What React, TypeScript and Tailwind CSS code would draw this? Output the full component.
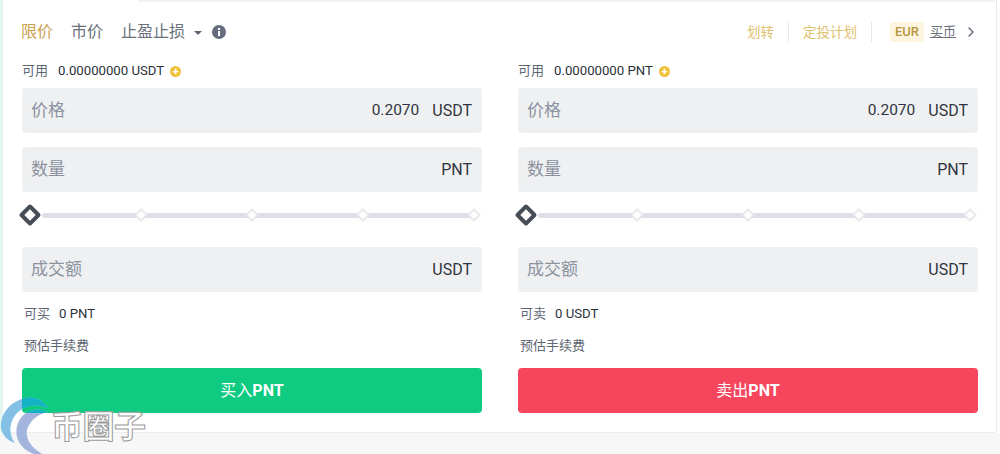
import { ChevronRight } from 'lucide-react'

function Field({ label, value, unit }: { label: string; value?: string; unit: string }) {
  return (
    <div className="flex h-[45px] items-center justify-between rounded-[3px] bg-[#eff0f2] pl-[9px] pr-[10px]">
      <span className="text-[17px] text-[#8b929e]">{label}</span>
      <div className="flex items-center gap-[13px] text-[#2f3540]">
        {value && <span className="text-[15.5px]">{value}</span>}
        <span className="text-[16px]">{unit}</span>
      </div>
    </div>
  )
}

function Slider() {
  return (
    <div className="relative mt-[12px] flex h-[22px] items-center">
      <div className="ml-[20px] mr-[6px] h-[5px] flex-1 rounded-sm bg-[#dfe0e7]" />
      <div className="absolute left-0 top-[3px] h-[16px] w-[16px] rotate-45 rounded-[2px] border-[4px] border-[#474d57] bg-white" />
      <div className="absolute left-[114px] top-[6px] h-[10px] w-[10px] rotate-45 rounded-[1px] border-2 border-[#e6e8ec] bg-white" />
      <div className="absolute left-[225px] top-[6px] h-[10px] w-[10px] rotate-45 rounded-[1px] border-2 border-[#e6e8ec] bg-white" />
      <div className="absolute left-[336px] top-[6px] h-[10px] w-[10px] rotate-45 rounded-[1px] border-2 border-[#e6e8ec] bg-white" />
      <div className="absolute left-[447px] top-[6px] h-[10px] w-[10px] rotate-45 rounded-[1px] border-2 border-[#e6e8ec] bg-white" />
    </div>
  )
}

function OrderForm(props: { balance: string; canLabel: string; canValue: string; action: string; color: string }) {
  return (
    <div className="w-[460px]">
      <div className="flex h-[18px] items-center text-[13px]">
        <span className="text-[#5e6673]">可用</span>
        <span className="ml-[10px] text-[13.2px] text-[#2b3139]">{props.balance}</span>
        <span className="ml-[6px] flex h-[11px] w-[11px] items-center justify-center rounded-full bg-[#efc23a] text-[11px] font-bold leading-none text-white">+</span>
      </div>
      <div className="mt-[8px]">
        <div className="mb-[14px]">
          <Field label="价格" value="0.2070" unit="USDT" />
        </div>
        <Field label="数量" unit="PNT" />
      </div>
      <Slider />
      <div className="mt-[21px]">
        <Field label="成交额" unit="USDT" />
      </div>
      <div className="mt-[13px] flex h-[18px] items-center pl-[2px] text-[13px]">
        <span className="text-[#5e6673]">{props.canLabel}</span>
        <span className="ml-[9px] text-[13.2px] text-[#2b3139]">{props.canValue}</span>
      </div>
      <div className="mt-[14px] flex h-[18px] items-center pl-[2px] text-[13px] text-[#5e6673]">预估手续费</div>
      <button className={`mt-[13px] flex h-[45px] w-full items-center justify-center rounded-[4px] text-[16px] text-white ${props.color}`}>
        {props.action}
        <span className="font-bold">PNT</span>
      </button>
    </div>
  )
}

export default function App() {
  return (
    <div
      className="relative h-[454px] w-[1000px] overflow-hidden bg-[#f7f7f8]"
      style={{ fontFamily: 'Roboto, "Noto Sans CJK SC", sans-serif' }}
    >
      <div className="flex h-[433px] w-full bg-white">
        <div className="w-[3px] bg-[#e4f6f1]" />
        <div className="flex-1 border-b border-[#ececee] pl-[19px] pr-[17px]">
          {/* Tabs */}
          <div className="flex h-[62px] items-center justify-between pt-[2px]">
            <div className="-ml-px flex items-center text-[16px]">
              <span className="text-[#c9a24f]">限价</span>
              <span className="ml-[18px] text-[#6a717c]">市价</span>
              <span className="ml-[18px] text-[#6a717c]">止盈止损</span>
              <span className="ml-[9px] mt-px h-0 w-0 border-x-[4px] border-t-[4px] border-x-transparent border-t-[#5e6673]" />
              <svg className="ml-[10px]" width="14" height="14" viewBox="0 0 14 14">
                <circle cx="7" cy="7" r="7" fill="#666d7f" />
                <rect x="6" y="6" width="2" height="5" fill="#fff" />
                <rect x="6" y="3" width="2" height="2" fill="#fff" />
              </svg>
            </div>
            <div className="flex items-center text-[13.5px] text-[#e0c170]">
              <span>划转</span>
              <span className="mx-[14px] h-[20px] w-px bg-[#e6e8ec]" />
              <span>定投计划</span>
              <span className="ml-[14px] mr-[18px] h-[20px] w-px bg-[#e6e8ec]" />
              <span className="rounded-[2px] bg-[#fdf5e0] px-[5px] text-[13px] font-medium text-[#b9953e]">EUR</span>
              <span className="ml-[6px] text-[13px] text-[#6a717c] underline">买币</span>
              <ChevronRight className="ml-[7px] h-[16px] w-[16px] text-[#5e6673]" />
            </div>
          </div>
          {/* Forms */}
          <div className="flex gap-[36px]">
            <OrderForm balance="0.00000000 USDT" canLabel="可买" canValue="0 PNT" action="买入" color="bg-[#0ecb81]" />
            <OrderForm balance="0.00000000 PNT" canLabel="可卖" canValue="0 USDT" action="卖出" color="bg-[#f6465d]" />
          </div>
        </div>
        <div className="w-[4px] border-l border-[#ececee] bg-white" />
      </div>
      {/* top strip */}
      <div className="absolute left-[138px] right-[5px] top-0 h-[2px] bg-[#f1f1f2]" />
      {/* watermark */}
      <div className="absolute left-0 top-[392px] flex items-center">
        <svg width="52" height="62" viewBox="0 0 52 62" fill="none">
          <defs>
            <clipPath id="onButton">
              <rect x="22" y="0" width="30" height="21" />
            </clipPath>
          </defs>
          <path d="M48 16C42 7 34 4 26 6C10 9 0 22 1 36C2 43 8 49 15 51C9 43 9 33 14 25C20 15 34 10 48 16Z" fill="#84bfe6" />
          <path d="M48 20C36 14 23 19 18 31C13 44 20 57 34 62L42 62C32 56 25 47 27 38C30 28 38 22 48 20Z" fill="#a3b5dc" />
          <g clipPath="url(#onButton)" fill="#14b3c4">
            <path d="M48 16C42 7 34 4 26 6C10 9 0 22 1 36C2 43 8 49 15 51C9 43 9 33 14 25C20 15 34 10 48 16Z" />
            <path d="M48 20C36 14 23 19 18 31C13 44 20 57 34 62L42 62C32 56 25 47 27 38C30 28 38 22 48 20Z" />
          </g>
        </svg>
        <span className="-ml-[1px] mt-[8px] text-[32px] font-bold leading-none tracking-[-0.5px] text-white [-webkit-text-stroke:1px_#9a9a9a]">币圈子</span>
      </div>
    </div>
  )
}
